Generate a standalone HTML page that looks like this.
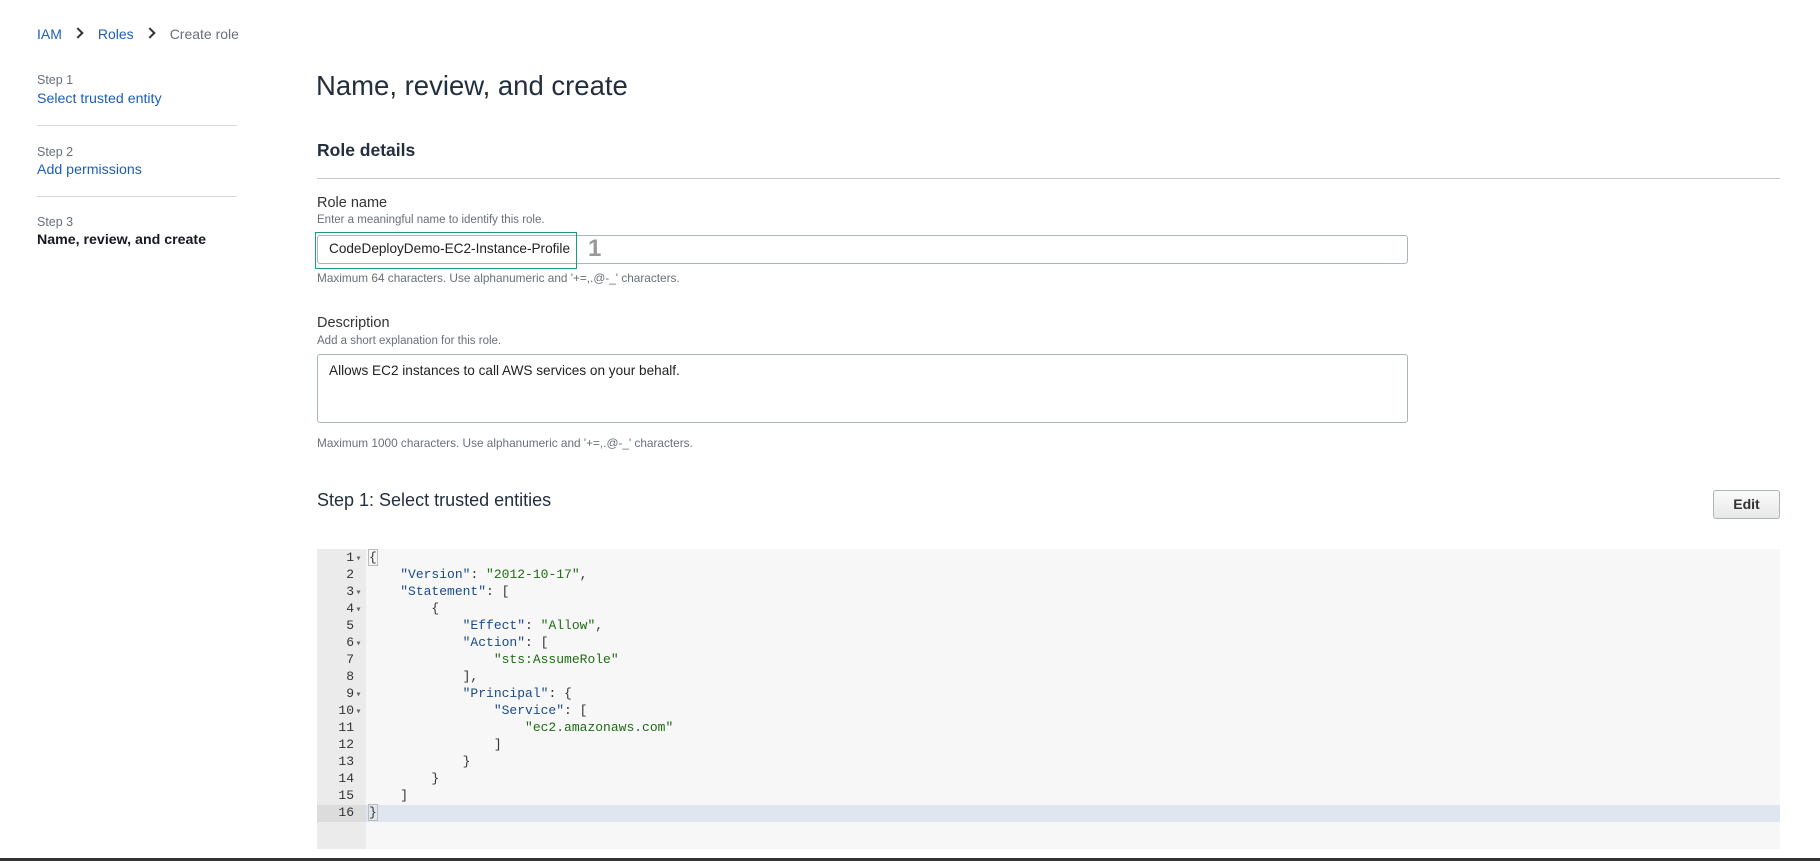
<!DOCTYPE html>
<html><head><meta charset="utf-8"><style>
*{box-sizing:border-box;margin:0;padding:0}
body{width:1820px;height:861px;background:#fff;font-family:"Liberation Sans",Arial,sans-serif;color:#16191f;position:relative;overflow:hidden}
.a{position:absolute;white-space:nowrap}
.link{color:#1d5fb4}
.sm{font-size:13px;color:#687078}
.div{position:absolute;left:37px;width:200px;height:1px;background:#d5dbdb}
.code{position:absolute;left:317px;top:549px;width:1463px;height:300px;background:#f7f7f7}
.gut{position:absolute;left:0;top:0;width:49px;height:300px;background:#ebebeb}
.ln{position:absolute;left:0;width:46px;text-align:right;font-family:"Liberation Mono",monospace;font-size:13px;color:#333;line-height:17px}
.cl{position:absolute;left:52px;font-family:"Liberation Mono",monospace;font-size:13px;line-height:17px;color:#333;white-space:pre}
.k{color:#1a4a8a}.s{color:#1f6b14}
.ar{font-size:10px;color:#666;display:inline-block;width:9px;text-align:center}
.sp{display:inline-block;width:9px}
.chev{display:inline-block;width:8px;height:8px;border-right:2px solid #333;border-top:2px solid #333;transform:rotate(45deg);margin:0 16px 2px 12px}
</style></head><body>
<div class="a" style="left:37px;top:26px;font-size:14px"><span class="link">IAM</span><span class="chev"></span><span class="link">Roles</span><span class="chev"></span><span style="color:#687078">Create role</span></div>

<div class="a sm" style="left:37px;top:73px;font-size:12.5px">Step 1</div>
<div class="a link" style="left:37px;top:91px;font-size:14.2px">Select trusted entity</div>
<div class="div" style="top:125px"></div>
<div class="a sm" style="left:37px;top:145px;font-size:12.5px">Step 2</div>
<div class="a link" style="left:37px;top:162px;font-size:14.2px">Add permissions</div>
<div class="div" style="top:196px"></div>
<div class="a sm" style="left:37px;top:215px;font-size:12.5px">Step 3</div>
<div class="a" style="left:37px;top:232px;font-size:14.2px;font-weight:bold">Name, review, and create</div>

<div class="a" style="left:316px;top:70px;font-size:27.5px;color:#232f3e">Name, review, and create</div>
<div class="a" style="left:317px;top:140px;font-size:17.5px;font-weight:bold;color:#232f3e">Role details</div>
<div class="a" style="left:317px;top:178px;width:1463px;height:1px;background:#c6c6c6"></div>

<div class="a" style="left:317px;top:195px;font-size:14.5px;color:#333">Role name</div>
<div class="a sm" style="left:317px;top:214px;font-size:11.5px">Enter a meaningful name to identify this role.</div>
<div class="a" style="left:317px;top:235px;width:1091px;height:29px;border:1px solid #aab7b8;border-radius:3px"></div>
<div class="a" style="left:315px;top:232px;width:262px;height:37px;border:1px solid #1a9a7a"></div>
<div class="a" style="left:329px;top:241px;font-size:13.6px;color:#222">CodeDeployDemo-EC2-Instance-Profile</div>
<div class="a" style="left:588px;top:235px;font-size:24px;font-weight:bold;color:#999">1</div>
<div class="a sm" style="left:317px;top:271px;font-size:11.8px">Maximum 64 characters. Use alphanumeric and '+=,.@-_' characters.</div>

<div class="a" style="left:317px;top:315px;font-size:14.5px;color:#333">Description</div>
<div class="a sm" style="left:317px;top:335px;font-size:11.5px">Add a short explanation for this role.</div>
<div class="a" style="left:317px;top:354px;width:1091px;height:69px;border:1px solid #aab7b8;border-radius:3px"></div>
<div class="a" style="left:329px;top:363px;font-size:13.6px;color:#222">Allows EC2 instances to call AWS services on your behalf.</div>
<div class="a sm" style="left:317px;top:436px;font-size:11.8px">Maximum 1000 characters. Use alphanumeric and '+=,.@-_' characters.</div>

<div class="a" style="left:317px;top:490px;font-size:18px;color:#232f3e">Step 1: Select trusted entities</div>
<div class="a" style="left:1713px;top:490px;width:67px;height:29px;border:1px solid #aab7b8;border-radius:3px;background:linear-gradient(#fafafa,#e8e8e8);text-align:center;line-height:27px;font-size:14px;font-weight:bold;color:#333">Edit</div>

<div class="code">
<div class="gut"></div>
<div style="position:absolute;left:0;top:256px;width:1463px;height:17px;background:#e0e6ef"></div>
<div style="position:absolute;left:0;top:256px;width:49px;height:17px;background:#dcdcdc"></div>
<div class="ln" style="top:0px">1<span class="ar">▾</span></div>
<div class="ln" style="top:17px">2<span class="sp"></span></div>
<div class="ln" style="top:34px">3<span class="ar">▾</span></div>
<div class="ln" style="top:51px">4<span class="ar">▾</span></div>
<div class="ln" style="top:68px">5<span class="sp"></span></div>
<div class="ln" style="top:85px">6<span class="ar">▾</span></div>
<div class="ln" style="top:102px">7<span class="sp"></span></div>
<div class="ln" style="top:119px">8<span class="sp"></span></div>
<div class="ln" style="top:136px">9<span class="ar">▾</span></div>
<div class="ln" style="top:153px">10<span class="ar">▾</span></div>
<div class="ln" style="top:170px">11<span class="sp"></span></div>
<div class="ln" style="top:187px">12<span class="sp"></span></div>
<div class="ln" style="top:204px">13<span class="sp"></span></div>
<div class="ln" style="top:221px">14<span class="sp"></span></div>
<div class="ln" style="top:238px">15<span class="sp"></span></div>
<div class="ln" style="top:255px">16<span class="sp"></span></div>
<div class="cl" style="top:0"><span style="outline:1px solid #bbb">{</span>
    <span class="k">"Version"</span>: <span class="s">"2012-10-17"</span>,
    <span class="k">"Statement"</span>: [
        {
            <span class="k">"Effect"</span>: <span class="s">"Allow"</span>,
            <span class="k">"Action"</span>: [
                <span class="s">"sts:AssumeRole"</span>
            ],
            <span class="k">"Principal"</span>: {
                <span class="k">"Service"</span>: [
                    <span class="s">"ec2.amazonaws.com"</span>
                ]
            }
        }
    ]
<span style="outline:1px solid #bbb">}</span></div>
</div>
<div class="a" style="left:0;top:858px;width:1820px;height:3px;background:#333"></div>
</body></html>
